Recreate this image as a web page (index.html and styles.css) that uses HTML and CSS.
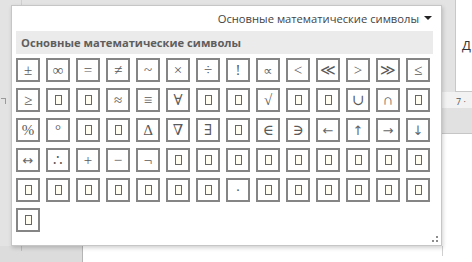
FILE: index.html
```html
<!DOCTYPE html>
<html lang="ru">
<head>
    <meta charset="UTF-8">
    <title>Символы</title>
    <link rel="stylesheet" href="styles.css">
</head>
<body>
    <div class="screen">
        <div class="bg-main">
            <div class="bg-mark"></div>
            <div class="bg-line"></div>
        </div>
        <div class="bg-side">
            <div class="side-top">
                <div class="side-box">Д</div>
            </div>
            <div class="side-ruler">7 ·</div>
            <div class="side-gray"></div>
            <div class="side-rest"><span class="tick"></span></div>
        </div>
        <div class="bg-bottom">
            <div class="bottom-gray"><span class="tick"></span></div>
            <div class="bottom-white"></div>
        </div>
    </div>

    <div class="gallery">
        <div class="gallery-head">
            <span class="gallery-name">Основные математические символы</span>
            <span class="caret"></span>
        </div>
        <div class="gallery-band">Основные математические символы</div>
        <div class="symbols">
            <div class="sym">±</div>
            <div class="sym">∞</div>
            <div class="sym">=</div>
            <div class="sym">≠</div>
            <div class="sym">~</div>
            <div class="sym">×</div>
            <div class="sym">÷</div>
            <div class="sym">!</div>
            <div class="sym wide">∝</div>
            <div class="sym">&lt;</div>
            <div class="sym">≪</div>
            <div class="sym">&gt;</div>
            <div class="sym">≫</div>
            <div class="sym">≤</div>

            <div class="sym">≥</div>
            <div class="sym"><i class="tofu"></i></div>
            <div class="sym"><i class="tofu"></i></div>
            <div class="sym">≈</div>
            <div class="sym">≡</div>
            <div class="sym">∀</div>
            <div class="sym"><i class="tofu"></i></div>
            <div class="sym"><i class="tofu"></i></div>
            <div class="sym">√</div>
            <div class="sym"><i class="tofu"></i></div>
            <div class="sym"><i class="tofu"></i></div>
            <div class="sym">∪</div>
            <div class="sym">∩</div>
            <div class="sym"><i class="tofu"></i></div>

            <div class="sym">%</div>
            <div class="sym">°</div>
            <div class="sym"><i class="tofu"></i></div>
            <div class="sym"><i class="tofu"></i></div>
            <div class="sym">∆</div>
            <div class="sym">∇</div>
            <div class="sym">∃</div>
            <div class="sym"><i class="tofu"></i></div>
            <div class="sym">∈</div>
            <div class="sym">∋</div>
            <div class="sym wide">←</div>
            <div class="sym wide">↑</div>
            <div class="sym wide">→</div>
            <div class="sym wide">↓</div>

            <div class="sym wide">↔</div>
            <div class="sym">∴</div>
            <div class="sym">+</div>
            <div class="sym">−</div>
            <div class="sym">¬</div>
            <div class="sym"><i class="tofu"></i></div>
            <div class="sym"><i class="tofu"></i></div>
            <div class="sym"><i class="tofu"></i></div>
            <div class="sym"><i class="tofu"></i></div>
            <div class="sym"><i class="tofu"></i></div>
            <div class="sym"><i class="tofu"></i></div>
            <div class="sym"><i class="tofu"></i></div>
            <div class="sym"><i class="tofu"></i></div>
            <div class="sym"><i class="tofu"></i></div>

            <div class="sym"><i class="tofu"></i></div>
            <div class="sym"><i class="tofu"></i></div>
            <div class="sym"><i class="tofu"></i></div>
            <div class="sym"><i class="tofu"></i></div>
            <div class="sym"><i class="tofu"></i></div>
            <div class="sym"><i class="tofu"></i></div>
            <div class="sym"><i class="tofu"></i></div>
            <div class="sym">·</div>
            <div class="sym"><i class="tofu"></i></div>
            <div class="sym"><i class="tofu"></i></div>
            <div class="sym"><i class="tofu"></i></div>
            <div class="sym"><i class="tofu"></i></div>
            <div class="sym"><i class="tofu"></i></div>
            <div class="sym"><i class="tofu"></i></div>

            <div class="sym"><i class="tofu"></i></div>
        </div>
        <div class="gallery-foot">
            <svg class="grip" width="8" height="8" viewBox="0 0 8 8">
                <rect x="5" y="0" width="2" height="2" fill="#8c8c8c"/>
                <rect x="1" y="4" width="2" height="2" fill="#8c8c8c"/>
                <rect x="5" y="4" width="2" height="2" fill="#8c8c8c"/>
            </svg>
        </div>
    </div>
</body>
</html>
```

FILE: styles.css
```css
body {
    margin: 0;
    width: 472px;
    height: 262px;
    overflow: hidden;
    background-color: #e3e3e3;
    font-family: 'Open Sans', 'Noto Sans', sans-serif;
}

.screen {
    display: grid;
    grid-template-columns: 442px 30px;
    grid-template-rows: 246px 16px;
    height: 262px;
}

.bg-main {
    grid-column: 1;
    grid-row: 1;
    display: flex;
    align-items: flex-start;
    background-color: #e3e3e3;
}

.bg-main .bg-mark {
    width: 4px;
    height: 5px;
    margin: 98px 0 0 1px;
    border-top: 1px solid #9a9a9a;
    border-right: 1px solid #9a9a9a;
}

.bg-main .bg-line {
    width: 1px;
    height: 100%;
    margin-left: 15px;
    background-color: #cfcfcf;
}

.bg-side {
    grid-column: 2;
    grid-row: 1 / 3;
    display: flex;
    flex-direction: column;
    min-width: 0;
}

.bg-side .side-top {
    height: 92px;
    display: flex;
    padding-left: 13px;
    background-color: #e3e3e3;
}

.bg-side .side-box {
    flex: 1;
    background-color: #ffffff;
    border-left: 1px solid #c8c8c8;
    border-bottom: 1px solid #c8c8c8;
    padding: 37px 0 0 6px;
    font-size: 13px;
    line-height: 16px;
    color: #333;
}

.bg-side .side-ruler {
    height: 16px;
    padding-left: 14px;
    padding-top: 3px;
    box-sizing: border-box;
    font-size: 9px;
    line-height: 13px;
    color: #555;
    background-color: #f2f2f2;
    white-space: nowrap;
}

.bg-side .side-gray {
    height: 25px;
    background-color: #e1e1e1;
    border-bottom: 1px solid #c6c6c6;
}

.bg-side .side-rest {
    flex: 1;
    background-color: #ffffff;
    display: flex;
    flex-direction: column;
    justify-content: flex-end;
}

.bg-side .side-rest .tick {
    width: 1px;
    height: 10px;
    margin-bottom: 6px;
    background-color: #d0d0d0;
}

.bg-bottom {
    grid-column: 1;
    grid-row: 2;
    display: grid;
    grid-template-columns: 82px 1fr;
}

.bg-bottom .bottom-gray {
    background-color: #dcdcdc;
    padding-left: 21px;
}

.bg-bottom .tick {
    display: block;
    width: 1px;
    height: 5px;
    background-color: #bdbdbd;
}

.bg-bottom .bottom-white {
    background-color: #ffffff;
    border-left: 1px solid #b5b5b5;
}

.gallery {
    position: absolute;
    left: 11px;
    top: 5px;
    width: 431px;
    height: 241px;
    box-sizing: border-box;
    background-color: #ffffff;
    border: 1px solid #c6c6c6;
    box-shadow: 1px 2px 4px rgba(0, 0, 0, 0.18);
    padding: 0 8px 0 4px;
    display: flex;
    flex-direction: column;
}

.gallery .gallery-head {
    height: 25px;
    display: flex;
    justify-content: flex-end;
    align-items: center;
    gap: 5px;
    padding-right: 1px;
    font-size: 11.2px;
    color: #444;
}

.gallery .caret {
    width: 0;
    height: 0;
    border-left: 4px solid transparent;
    border-right: 4px solid transparent;
    border-top: 4px solid #222;
    margin-top: -2px;
}

.gallery .gallery-band {
    height: 23px;
    line-height: 23px;
    background-color: #ebebeb;
    padding-left: 5px;
    font-size: 11.2px;
    font-weight: bold;
    color: #5e5e5e;
}

.gallery .symbols {
    margin-top: 4px;
    display: grid;
    grid-template-columns: repeat(14, 24px);
    grid-auto-rows: 24px;
    gap: 6px;
}

.gallery .sym {
    box-sizing: border-box;
    border: 2px solid #858585;
    display: flex;
    align-items: center;
    justify-content: center;
    font-family: 'Liberation Serif', 'DejaVu Serif', serif;
    font-size: 15px;
    color: #5a5a5a;
}

.gallery .sym.wide {
    font-family: 'DejaVu Sans', sans-serif;
    font-size: 13px;
    color: #666;
}

.gallery .tofu {
    display: block;
    width: 5px;
    height: 8px;
    border: 1px solid #666;
    background-color: #fffdf0;
}

.gallery .gallery-foot {
    margin-top: auto;
    display: flex;
    justify-content: flex-end;
    padding-bottom: 1px;
    margin-right: -6px;
}
```
